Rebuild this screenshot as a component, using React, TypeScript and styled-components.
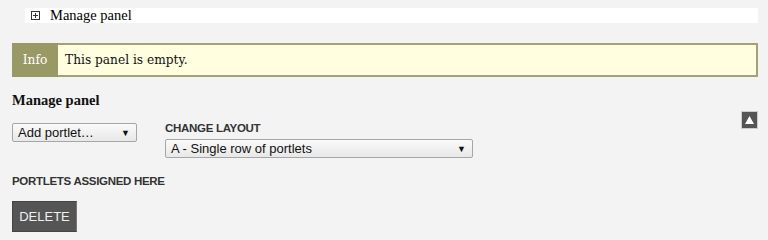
import styled, { createGlobalStyle } from 'styled-components';

const GlobalStyle = createGlobalStyle`
  body {
    margin: 0;
    background: #f3f3f3;
    font-family: "Liberation Sans", Arial, sans-serif;
  }
`

const Page = styled.div`
  position: relative;
  padding: 8px 10px 8px 12px;
`

const TopBar = styled.div`
  display: flex;
  align-items: center;
  gap: 10px;
  height: 15px;
  margin-left: 13px;
  padding-left: 6px;
  background: #fff;
  font-family: "Liberation Serif", serif;
  font-size: 14.5px;
  color: #000;
`

const PlusBox = styled.span`
  width: 7px;
  height: 7px;
  border: 1px solid #333;
  position: relative;

  &::before, &::after {
    content: '';
    position: absolute;
    background: #333;
  }
  &::before { width: 5px; height: 1px; left: 1px; top: 3px; }
  &::after { width: 1px; height: 5px; left: 3px; top: 1px; }
`

const InfoBox = styled.div`
  display: flex;
  margin-top: 20px;
  height: 30px;
  border: 2px solid #a4a274;
  background: #ffffe0;
  font-family: "DejaVu Serif", serif;
  font-size: 12.2px;
`

const InfoLabel = styled.div`
  display: flex;
  align-items: center;
  justify-content: center;
  width: 46px;
  margin: -2px 0 -2px -2px;
  background: #999966;
  color: #fff;
`

const InfoText = styled.div`
  display: flex;
  align-items: center;
  padding-left: 7px;
  color: #111;
`

const Heading = styled.h2`
  margin: 15px 0 0;
  font-family: "Liberation Serif", serif;
  font-weight: bold;
  font-size: 14.5px;
  color: #111;
`

const Controls = styled.div`
  display: flex;
  align-items: flex-start;
  gap: 28px;
  margin-top: 14px;
`

const Field = styled.div`
  display: flex;
  flex-direction: column;
  gap: 5px;
`

const Label = styled.div<{ $top?: number }>`
  font-weight: bold;
  font-size: 11.5px;
  letter-spacing: -0.3px;
  color: #333;
  margin-top: ${p => p.$top || 0}px;
`

const Select = styled.div<{ $w: number }>`
  display: flex;
  align-items: center;
  justify-content: space-between;
  box-sizing: border-box;
  width: ${p => p.$w}px;
  height: 19px;
  padding: 0 6px 0 5px;
  border: 1px solid #a6a6a6;
  border-radius: 2px;
  background: linear-gradient(#fafafa, #e8e8e8);
  font-size: 13px;
  color: #111;

  span.arrow {
    font-size: 9px;
  }
`

const UpButton = styled.div`
  position: absolute;
  right: 10px;
  top: 111px;
  width: 17px;
  height: 18px;
  box-sizing: border-box;
  display: flex;
  align-items: center;
  justify-content: center;
  background: #555;
  border: 1px solid #ccc;
`

const DeleteButton = styled.button`
  display: block;
  margin-top: 14px;
  width: 65px;
  height: 31px;
  background: #555;
  border: 1px solid #444;
  border-right-color: #777;
  color: #f0f0f0;
  font-family: "Liberation Sans", Arial, sans-serif;
  font-size: 13px;
  padding: 0;
`

export default function App() {
  return <>
    <GlobalStyle />
    <Page>
      <TopBar><PlusBox /> Manage panel</TopBar>

      <InfoBox>
        <InfoLabel>Info</InfoLabel>
        <InfoText>This panel is empty.</InfoText>
      </InfoBox>

      <Heading>Manage panel</Heading>

      <Controls>
        <Field>
          <Select $w={125}>Add portlet… <span className="arrow">▼</span></Select>
        </Field>
        <Field>
          <Label $top={-1}>CHANGE LAYOUT</Label>
          <Select $w={308}>A - Single row of portlets <span className="arrow">▼</span></Select>
        </Field>
      </Controls>

      <UpButton>
        <svg width="9" height="8" viewBox="0 0 9 8"><polygon points="4.5,0 9,8 0,8" fill="#fff" /></svg>
      </UpButton>

      <Label $top={17}>PORTLETS ASSIGNED HERE</Label>
      <DeleteButton>DELETE</DeleteButton>
    </Page>
  </>
}
